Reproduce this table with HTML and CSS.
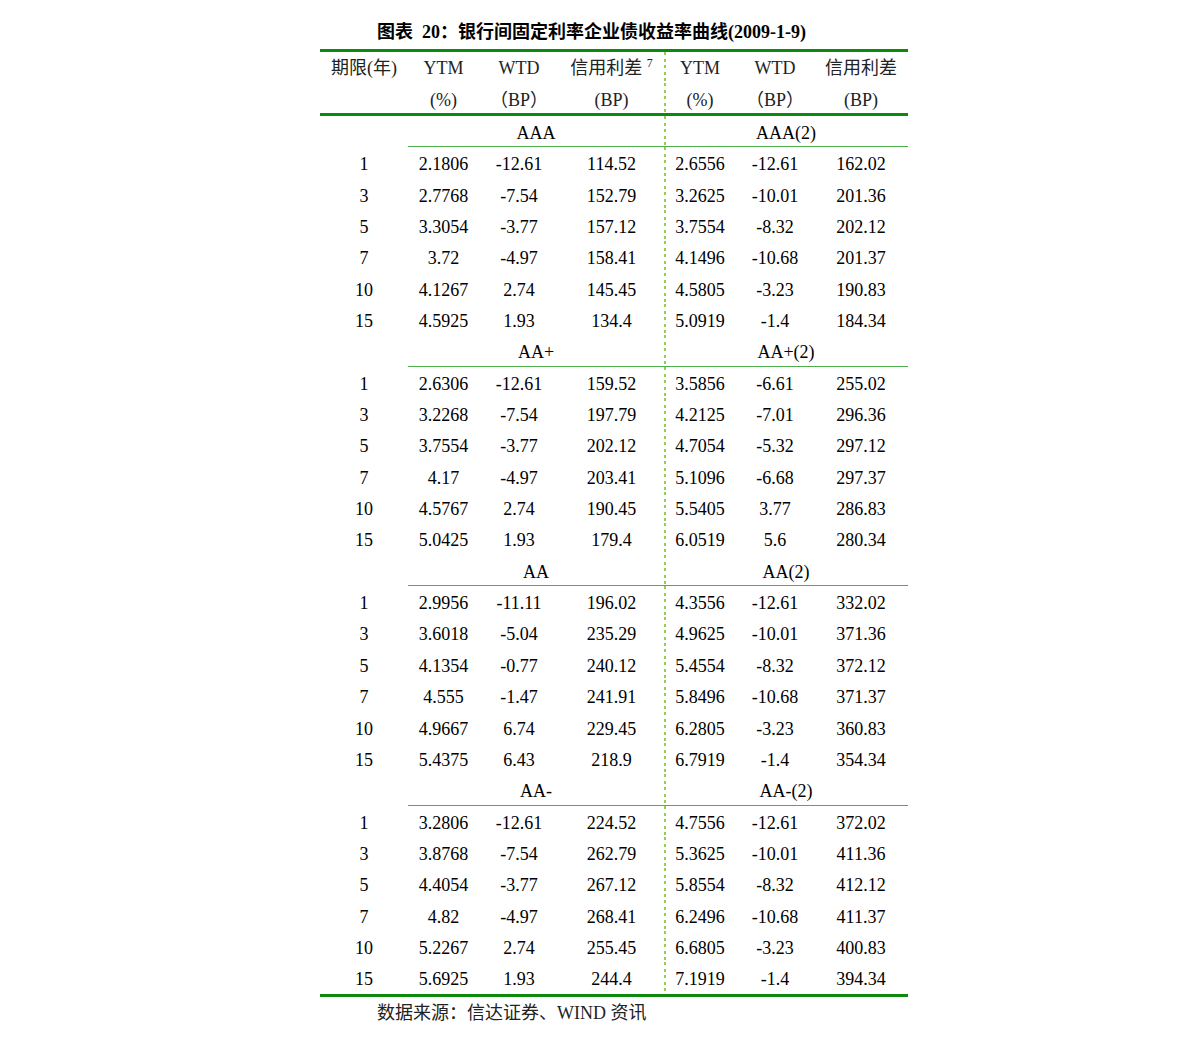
FILE: index.html
```html
<!DOCTYPE html>
<html lang="zh-CN">
<head>
<meta charset="utf-8">
<title>银行间固定利率企业债收益率曲线</title>
<link rel="stylesheet" href="styles.css">
</head>
<body>
<div class="wrap">
  <div class="title">图表&nbsp;&nbsp;20：银行间固定利率企业债收益率曲线(2009-1-9)</div>
  <div class="table">
    <div class="row head1">
      <div class="c">期限(年)</div><div class="c">YTM</div><div class="c">WTD</div><div class="c">信用利差 <sup>7</sup></div><div class="c dl">YTM</div><div class="c">WTD</div><div class="c">信用利差</div>
    </div>
    <div class="row head2">
      <div class="c"></div><div class="c">(%)</div><div class="c">（BP）</div><div class="c">(BP)</div><div class="c dl">(%)</div><div class="c">（BP）</div><div class="c">(BP)</div>
    </div>

    <div class="row sec"><div class="c"></div><div class="c span l">AAA</div><div class="c span r dl">AAA(2)</div></div>
    <div class="row"><div class="c">1</div><div class="c">2.1806</div><div class="c">-12.61</div><div class="c">114.52</div><div class="c dl">2.6556</div><div class="c">-12.61</div><div class="c">162.02</div></div>
    <div class="row"><div class="c">3</div><div class="c">2.7768</div><div class="c">-7.54</div><div class="c">152.79</div><div class="c dl">3.2625</div><div class="c">-10.01</div><div class="c">201.36</div></div>
    <div class="row"><div class="c">5</div><div class="c">3.3054</div><div class="c">-3.77</div><div class="c">157.12</div><div class="c dl">3.7554</div><div class="c">-8.32</div><div class="c">202.12</div></div>
    <div class="row"><div class="c">7</div><div class="c">3.72</div><div class="c">-4.97</div><div class="c">158.41</div><div class="c dl">4.1496</div><div class="c">-10.68</div><div class="c">201.37</div></div>
    <div class="row"><div class="c">10</div><div class="c">4.1267</div><div class="c">2.74</div><div class="c">145.45</div><div class="c dl">4.5805</div><div class="c">-3.23</div><div class="c">190.83</div></div>
    <div class="row"><div class="c">15</div><div class="c">4.5925</div><div class="c">1.93</div><div class="c">134.4</div><div class="c dl">5.0919</div><div class="c">-1.4</div><div class="c">184.34</div></div>

    <div class="row sec"><div class="c"></div><div class="c span l">AA+</div><div class="c span r dl">AA+(2)</div></div>
    <div class="row"><div class="c">1</div><div class="c">2.6306</div><div class="c">-12.61</div><div class="c">159.52</div><div class="c dl">3.5856</div><div class="c">-6.61</div><div class="c">255.02</div></div>
    <div class="row"><div class="c">3</div><div class="c">3.2268</div><div class="c">-7.54</div><div class="c">197.79</div><div class="c dl">4.2125</div><div class="c">-7.01</div><div class="c">296.36</div></div>
    <div class="row"><div class="c">5</div><div class="c">3.7554</div><div class="c">-3.77</div><div class="c">202.12</div><div class="c dl">4.7054</div><div class="c">-5.32</div><div class="c">297.12</div></div>
    <div class="row"><div class="c">7</div><div class="c">4.17</div><div class="c">-4.97</div><div class="c">203.41</div><div class="c dl">5.1096</div><div class="c">-6.68</div><div class="c">297.37</div></div>
    <div class="row"><div class="c">10</div><div class="c">4.5767</div><div class="c">2.74</div><div class="c">190.45</div><div class="c dl">5.5405</div><div class="c">3.77</div><div class="c">286.83</div></div>
    <div class="row"><div class="c">15</div><div class="c">5.0425</div><div class="c">1.93</div><div class="c">179.4</div><div class="c dl">6.0519</div><div class="c">5.6</div><div class="c">280.34</div></div>

    <div class="row sec"><div class="c"></div><div class="c span l">AA</div><div class="c span r dl">AA(2)</div></div>
    <div class="row"><div class="c">1</div><div class="c">2.9956</div><div class="c">-11.11</div><div class="c">196.02</div><div class="c dl">4.3556</div><div class="c">-12.61</div><div class="c">332.02</div></div>
    <div class="row"><div class="c">3</div><div class="c">3.6018</div><div class="c">-5.04</div><div class="c">235.29</div><div class="c dl">4.9625</div><div class="c">-10.01</div><div class="c">371.36</div></div>
    <div class="row"><div class="c">5</div><div class="c">4.1354</div><div class="c">-0.77</div><div class="c">240.12</div><div class="c dl">5.4554</div><div class="c">-8.32</div><div class="c">372.12</div></div>
    <div class="row"><div class="c">7</div><div class="c">4.555</div><div class="c">-1.47</div><div class="c">241.91</div><div class="c dl">5.8496</div><div class="c">-10.68</div><div class="c">371.37</div></div>
    <div class="row"><div class="c">10</div><div class="c">4.9667</div><div class="c">6.74</div><div class="c">229.45</div><div class="c dl">6.2805</div><div class="c">-3.23</div><div class="c">360.83</div></div>
    <div class="row"><div class="c">15</div><div class="c">5.4375</div><div class="c">6.43</div><div class="c">218.9</div><div class="c dl">6.7919</div><div class="c">-1.4</div><div class="c">354.34</div></div>

    <div class="row sec"><div class="c"></div><div class="c span l">AA-</div><div class="c span r dl">AA-(2)</div></div>
    <div class="row"><div class="c">1</div><div class="c">3.2806</div><div class="c">-12.61</div><div class="c">224.52</div><div class="c dl">4.7556</div><div class="c">-12.61</div><div class="c">372.02</div></div>
    <div class="row"><div class="c">3</div><div class="c">3.8768</div><div class="c">-7.54</div><div class="c">262.79</div><div class="c dl">5.3625</div><div class="c">-10.01</div><div class="c">411.36</div></div>
    <div class="row"><div class="c">5</div><div class="c">4.4054</div><div class="c">-3.77</div><div class="c">267.12</div><div class="c dl">5.8554</div><div class="c">-8.32</div><div class="c">412.12</div></div>
    <div class="row"><div class="c">7</div><div class="c">4.82</div><div class="c">-4.97</div><div class="c">268.41</div><div class="c dl">6.2496</div><div class="c">-10.68</div><div class="c">411.37</div></div>
    <div class="row"><div class="c">10</div><div class="c">5.2267</div><div class="c">2.74</div><div class="c">255.45</div><div class="c dl">6.6805</div><div class="c">-3.23</div><div class="c">400.83</div></div>
    <div class="row last"><div class="c">15</div><div class="c">5.6925</div><div class="c">1.93</div><div class="c">244.4</div><div class="c dl">7.1919</div><div class="c">-1.4</div><div class="c">394.34</div></div>
  </div>
  <div class="source">数据来源：信达证券、WIND 资讯</div>
</div>
</body>
</html>
```

FILE: styles.css
```css
html, body {
  margin: 0;
  padding: 0;
  background: #ffffff;
}

body {
  font-family: "Liberation Serif", "Noto Sans CJK SC", serif;
  font-size: 18px;
  color: #000;
}

.wrap {
  margin-left: 320px;
  width: 588px;
}

.title {
  box-sizing: border-box;
  height: 49px;
  padding-top: 19px;
  padding-left: 57px;
  line-height: 26px;
  font-weight: bold;
  white-space: nowrap;
}

.table {
  border-top: 3px solid #0b8a0b;
}

.row {
  display: grid;
  grid-template-columns: 88px 71px 80px 105px 72px 78px 94px;
  grid-template-rows: 100%;
  box-sizing: border-box;
  height: 31.35px;
}

.c {
  box-sizing: border-box;
  padding-top: 2px;
  text-align: center;
  line-height: 31px;
  white-space: nowrap;
}

.head1 .c,
.head2 .c {
  color: #222;
}

.head1 .c {
  padding-top: 1px;
}

.head2 {
  height: 32.65px;
  border-bottom: 3px solid #0b8a0b;
}

sup {
  font-size: 12px;
  line-height: 0;
  vertical-align: 7px;
}

.sec .span {
  border-bottom: 1.6px solid #4cae4c;
}

.sec .l {
  grid-column: 2 / 5;
}

.sec .r {
  grid-column: 5 / 8;
}

.dl {
  background-image: repeating-linear-gradient(to bottom, #92d050 0 3px, transparent 3px 6.6px);
  background-size: 2px 100%;
  background-repeat: no-repeat;
  background-position: left top;
}

.last {
  height: 34.35px;
  border-bottom: 3px solid #0b8a0b;
}

.source {
  padding-left: 57px;
  padding-top: 4px;
  line-height: 24px;
  color: #222;
}
```
